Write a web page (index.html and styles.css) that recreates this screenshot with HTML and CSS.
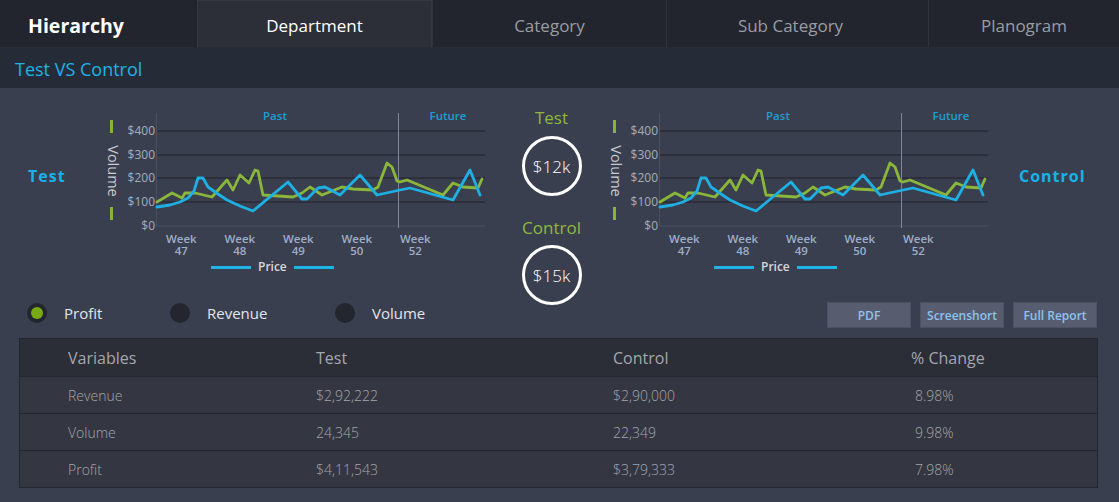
FILE: index.html
```html
<!DOCTYPE html>
<html>
<head>
<meta charset="utf-8">
<link rel="stylesheet" href="styles.css">
</head>
<body>
<div class="topbar">
  <div class="brand">Hierarchy</div>
  <div class="tab tab-active">Department</div>
  <div class="tab">Category</div>
  <div class="tab tab-sub">Sub Category</div>
  <div class="tab">Planogram</div>
</div>
<div class="subbar">Test VS Control</div>
<main class="main">
  <section class="charts">
    <div class="side-label side-left">Test</div>
    <div class="chart-wrap">
      <svg class="chart" width="390" height="128" viewBox="0 0 390 128">
        <rect class="mark" x="10" y="15" width="3" height="13"/>
        <rect class="mark" x="10" y="102" width="3" height="13"/>
        <text class="axis-title" transform="translate(8,66) rotate(90)" text-anchor="middle">Volume</text>
        <g class="ylab" text-anchor="end">
          <text x="55" y="30">$400</text>
          <text x="55" y="54">$300</text>
          <text x="55" y="77">$200</text>
          <text x="55" y="101">$100</text>
          <text x="55" y="125">$0</text>
        </g>
        <g class="grid">
          <line x1="57" y1="26" x2="385" y2="26"/>
          <line x1="57" y1="50" x2="385" y2="50"/>
          <line x1="57" y1="73" x2="385" y2="73"/>
          <line x1="57" y1="97" x2="385" y2="97"/>
        </g>
        <line class="axis" x1="57" y1="121" x2="385" y2="121"/>
        <line class="axis" x1="56.5" y1="8" x2="56.5" y2="121"/>
        <line class="divider" x1="298.5" y1="8" x2="298.5" y2="123"/>
        <text class="zone" x="175" y="15" text-anchor="middle">Past</text>
        <text class="zone" x="348" y="15" text-anchor="middle">Future</text>
        <polyline class="line-green" points="57,97 72,88 82,93 85,88 95,88 112,92 127,75 133,85 140,70 149,78 155,65 158,66 163,90 193,92 202,88 210,82 222,90 242,82 253,84 273,85 278,82 287,58 292,62 297,76 300,77 307,75 343,90 353,78 363,82 378,83 382,74"/>
        <polyline class="line-blue" points="57,102 70,100 80,97 88,93 94,86 98,73 103,73 108,82 118,89 127,95 140,101 153,106 188,77 202,94 207,94 218,83 225,82 240,90 260,70 277,90 300,85 310,83 353,95 370,65 380,90"/>
      </svg>
      <div class="xaxis">
        <div class="xtick">Week<br>47</div>
        <div class="xtick">Week<br>48</div>
        <div class="xtick">Week<br>49</div>
        <div class="xtick">Week<br>50</div>
        <div class="xtick">Week<br>52</div>
      </div>
      <div class="legend"><span class="legend-line"></span><span>Price</span><span class="legend-line"></span></div>
    </div>
    <div class="summary">
      <div class="sum-title">Test</div>
      <div class="ring">$12k</div>
      <div class="sum-title sum-gap">Control</div>
      <div class="ring ring-2">$15k</div>
    </div>
    <div class="chart-wrap">
      <svg class="chart" width="390" height="128" viewBox="0 0 390 128">
        <rect class="mark" x="10" y="15" width="3" height="13"/>
        <rect class="mark" x="10" y="102" width="3" height="13"/>
        <text class="axis-title" transform="translate(8,66) rotate(90)" text-anchor="middle">Volume</text>
        <g class="ylab" text-anchor="end">
          <text x="55" y="30">$400</text>
          <text x="55" y="54">$300</text>
          <text x="55" y="77">$200</text>
          <text x="55" y="101">$100</text>
          <text x="55" y="125">$0</text>
        </g>
        <g class="grid">
          <line x1="57" y1="26" x2="385" y2="26"/>
          <line x1="57" y1="50" x2="385" y2="50"/>
          <line x1="57" y1="73" x2="385" y2="73"/>
          <line x1="57" y1="97" x2="385" y2="97"/>
        </g>
        <line class="axis" x1="57" y1="121" x2="385" y2="121"/>
        <line class="axis" x1="56.5" y1="8" x2="56.5" y2="121"/>
        <line class="divider" x1="298.5" y1="8" x2="298.5" y2="123"/>
        <text class="zone" x="175" y="15" text-anchor="middle">Past</text>
        <text class="zone" x="348" y="15" text-anchor="middle">Future</text>
        <polyline class="line-green" points="57,97 72,88 82,93 85,88 95,88 112,92 127,75 133,85 140,70 149,78 155,65 158,66 163,90 193,92 202,88 210,82 222,90 242,82 253,84 273,85 278,82 287,58 292,62 297,76 300,77 307,75 343,90 353,78 363,82 378,83 382,74"/>
        <polyline class="line-blue" points="57,102 70,100 80,97 88,93 94,86 98,73 103,73 108,82 118,89 127,95 140,101 153,106 188,77 202,94 207,94 218,83 225,82 240,90 260,70 277,90 300,85 310,83 353,95 370,65 380,90"/>
      </svg>
      <div class="xaxis">
        <div class="xtick">Week<br>47</div>
        <div class="xtick">Week<br>48</div>
        <div class="xtick">Week<br>49</div>
        <div class="xtick">Week<br>50</div>
        <div class="xtick">Week<br>52</div>
      </div>
      <div class="legend"><span class="legend-line"></span><span>Price</span><span class="legend-line"></span></div>
    </div>
    <div class="side-label side-right">Control</div>
  </section>

  <section class="controls">
    <div class="radios">
      <label class="radio"><span class="dot dot-on"></span><span>Profit</span></label>
      <label class="radio"><span class="dot"></span><span>Revenue</span></label>
      <label class="radio"><span class="dot"></span><span>Volume</span></label>
    </div>
    <div class="buttons">
      <button class="btn">PDF</button>
      <button class="btn">Screenshort</button>
      <button class="btn">Full Report</button>
    </div>
  </section>

  <div class="table">
    <div class="tr th">
      <div>Variables</div><div>Test</div><div>Control</div><div>% Change</div>
    </div>
    <div class="tr">
      <div>Revenue</div><div>$2,92,222</div><div>$2,90,000</div><div class="pct">8.98%</div>
    </div>
    <div class="tr">
      <div>Volume</div><div>24,345</div><div>22,349</div><div class="pct">9.98%</div>
    </div>
    <div class="tr">
      <div>Profit</div><div>$4,11,543</div><div>$3,79,333</div><div class="pct">7.98%</div>
    </div>
  </div>
</main>
</body>
</html>
```
FILE: styles.css
```css
* { box-sizing: border-box; }
html, body { margin: 0; padding: 0; }
body {
  width: 1119px;
  height: 502px;
  overflow: hidden;
  background: #3a3f4f;
  font-family: "Open Sans", "Noto Sans", sans-serif;
}
.topbar {
  display: grid;
  grid-template-columns: 197px 235px 234px 262px 1fr;
  height: 47px;
  background: #22252d;
}
.brand {
  color: #ffffff;
  font-weight: 700;
  font-size: 19.5px;
  padding-left: 28px;
  line-height: 51px;
  height: 47px;
}
.tab {
  color: #9a9ca3;
  font-size: 17px;
  text-align: center;
  line-height: 52px;
  height: 47px;
  border-left: 1px solid #30333b;
}
.tab-sub { padding-right: 14px; }
.tab-active {
  background: #2c2f38;
  color: #ffffff;
  border-left: 1px solid #353841;
  border-right: 1px solid #353841;
  border-top: 1px solid #353841;
  line-height: 50px;
}
.subbar {
  height: 41px;
  background: #262b38;
  color: #1db2e6;
  font-size: 18px;
  padding-left: 15px;
  line-height: 44px;
}
.main { display: block; }
.charts {
  display: flex;
  align-items: flex-start;
  height: 197px;
  padding-top: 17px;
}
.side-label {
  color: #17b2e8;
  font-weight: 700;
  font-size: 16px;
  letter-spacing: 1px;
  line-height: 20px;
  margin-top: 61px;
}
.side-left { width: 100px; padding-left: 28px; }
.side-right { padding-left: 26px; }
.chart-wrap { width: 390px; flex: none; }
.chart { display: block; overflow: visible; }
.mark { fill: #86b33a; }
.axis-title { fill: #c9cbd0; font-size: 14.5px; }
.ylab text { fill: #a6acbb; font-size: 12px; }
.grid line { stroke: #2a2d36; stroke-width: 1.6; }
.axis { stroke: #4b5060; stroke-width: 1; }
.divider { stroke: #80859a; stroke-width: 1; }
.zone { fill: #1a9fd2; font-size: 11.5px; font-weight: 600; }
.line-green {
  fill: none; stroke: #8ab73b; stroke-width: 2.8;
  stroke-linejoin: round; stroke-linecap: round;
}
.line-blue {
  fill: none; stroke: #1eb0e2; stroke-width: 2.8;
  stroke-linejoin: round; stroke-linecap: round;
}
.xaxis {
  display: flex;
  padding-left: 52px;
}
.xtick {
  width: 58.5px;
  text-align: center;
  color: #9eaec9;
  font-size: 11.5px;
  font-weight: 600;
  line-height: 12px;
}
.legend {
  display: flex;
  align-items: center;
  gap: 7px;
  padding-left: 111px;
  margin-top: 4px;
  height: 12px;
  color: #d6d8dd;
  font-size: 12px;
  font-weight: 600;
  line-height: 12px;
}
.legend-line {
  width: 40px;
  height: 3px;
  background: #1eb4e6;
  margin-top: 1px;
}
.summary {
  width: 113px;
  flex: none;
  display: flex;
  flex-direction: column;
  align-items: center;
  padding-left: 10px;
}
.sum-title {
  color: #8bbb3c;
  font-size: 17px;
  line-height: 22px;
  margin-top: 2px;
}
.sum-gap { margin-top: 21px; }
.ring {
  width: 60px;
  height: 60px;
  border: 3px solid #ffffff;
  border-radius: 50%;
  color: #ffffff;
  font-size: 17px;
  font-weight: 300;
  display: flex;
  align-items: center;
  justify-content: center;
  margin-top: 7px;
  flex: none;
}
.ring-2 { margin-top: 6px; }
.controls {
  display: flex;
  align-items: flex-start;
  height: 53px;
  padding-top: 17px;
  padding-right: 22px;
}
.radios {
  display: grid;
  grid-template-columns: 143px 165px auto;
  padding-left: 27px;
  margin-top: 1px;
}
.radio {
  display: flex;
  align-items: center;
  gap: 17px;
  color: #e4e5e8;
  font-size: 15px;
  height: 20px;
}
.dot {
  width: 20px;
  height: 20px;
  border-radius: 50%;
  background: #23262e;
  display: flex;
  align-items: center;
  justify-content: center;
  flex: none;
}
.dot-on::after {
  content: "";
  width: 12px;
  height: 12px;
  border-radius: 50%;
  background: #79aa14;
}
.buttons {
  margin-left: auto;
  display: flex;
  gap: 9px;
}
.btn {
  width: 84px;
  height: 26px;
  border: 1px solid #4d5262;
  background: #575d6e;
  color: #8cc3f0;
  font-family: "Open Sans", "Noto Sans", sans-serif;
  font-size: 12px;
  font-weight: 600;
  padding: 0;
}
.table {
  margin-left: 19px;
  width: 1079px;
  border: 1px solid #23262d;
  background: #343741;
}
.tr {
  display: grid;
  grid-template-columns: 248px 297px 298px 1fr;
  padding-left: 48px;
  height: 37px;
  align-items: center;
  color: #a2a5ad;
  font-size: 14px;
  font-weight: 300;
  border-top: 1px solid #23262d;
}
.tr.th {
  background: #2b2e37;
  height: 37px;
  font-size: 16px;
  font-weight: 400;
  color: #a5a7ad;
  border-top: none;
}
.pct { padding-left: 4px; }
```
